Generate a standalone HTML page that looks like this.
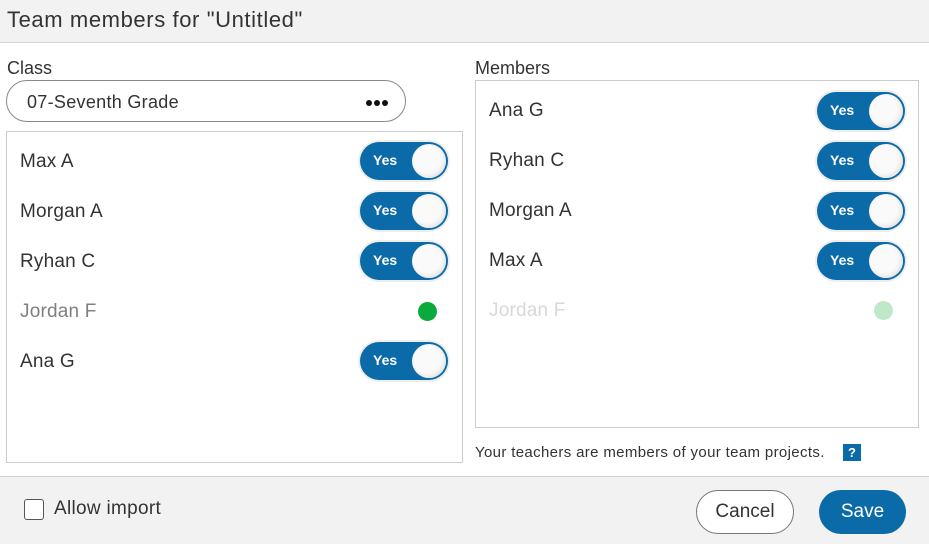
<!DOCTYPE html>
<html><head><meta charset="utf-8"><style>
*{box-sizing:border-box;margin:0;padding:0}
body{width:929px;height:544px;position:relative;background:#fff;font-family:"Liberation Sans",sans-serif;color:#333;overflow:hidden}
.abs{position:absolute}
.hdr{left:0;top:0;width:929px;height:43px;background:#f2f2f2;border-bottom:1px solid #d4d4d4}
.hdr div{position:absolute;left:7px;top:7px;font-size:22px;letter-spacing:0.6px;color:#333}
.lbl{font-size:18px;color:#333}
.sel{left:6px;top:80px;width:400px;height:42px;border:1px solid #888;border-radius:21px}
.sel span{position:absolute;left:20px;top:11px;font-size:18px;letter-spacing:0.3px;color:#333}
.box{border:1px solid #ccc}
.row{position:absolute;font-size:19px;letter-spacing:0.2px;color:#333}
.tg{position:absolute;width:88px;height:38px;background:#0b6aa8;border-radius:19px;box-shadow:0 0 0 2px #eee}
.tg b{position:absolute;left:13px;top:10px;color:#fff;font-size:14px;font-weight:bold}
.tg i{position:absolute;right:2px;top:2px;width:34px;height:34px;border-radius:50%;background:#fafafa;box-shadow:inset -2px -2px 4px #e4e4e4}
.dot{position:absolute;width:19px;height:19px;border-radius:50%}
.ftr{left:0;top:476px;width:929px;height:68px;background:#f2f2f2;border-top:1px solid #d4d4d4}
.dd{position:absolute;top:19px;width:6px;height:6px;border-radius:50%;background:#111}
</style></head><body>
<div class="abs hdr"><div>Team members for "Untitled"</div></div>
<div class="abs lbl" style="left:7px;top:58px">Class</div>
<div class="abs sel"><span>07-Seventh Grade</span><i class="dd" style="left:359px"></i><i class="dd" style="left:367px"></i><i class="dd" style="left:375px"></i></div>
<div class="abs box" style="left:6px;top:131px;width:457px;height:332px"></div>
<div class="row" style="left:20px;top:151px">Max A</div><div class="tg" style="left:360px;top:142px"><b>Yes</b><i></i></div>
<div class="row" style="left:20px;top:201px">Morgan A</div><div class="tg" style="left:360px;top:192px"><b>Yes</b><i></i></div>
<div class="row" style="left:20px;top:251px">Ryhan C</div><div class="tg" style="left:360px;top:242px"><b>Yes</b><i></i></div>
<div class="row" style="left:20px;top:301px;color:#808080">Jordan F</div><div class="dot" style="left:418px;top:302px;background:#0aaa3c"></div>
<div class="row" style="left:20px;top:351px">Ana G</div><div class="tg" style="left:360px;top:342px"><b>Yes</b><i></i></div>

<div class="abs lbl" style="left:475px;top:58px">Members</div>
<div class="abs box" style="left:475px;top:80px;width:444px;height:348px"></div>
<div class="row" style="left:489px;top:100px">Ana G</div><div class="tg" style="left:817px;top:92px"><b>Yes</b><i></i></div>
<div class="row" style="left:489px;top:150px">Ryhan C</div><div class="tg" style="left:817px;top:142px"><b>Yes</b><i></i></div>
<div class="row" style="left:489px;top:200px">Morgan A</div><div class="tg" style="left:817px;top:192px"><b>Yes</b><i></i></div>
<div class="row" style="left:489px;top:250px">Max A</div><div class="tg" style="left:817px;top:242px"><b>Yes</b><i></i></div>
<div class="row" style="left:489px;top:300px;color:#d8d8d8">Jordan F</div><div class="dot" style="left:874px;top:301px;background:#bfe8c9"></div>

<div class="abs" style="left:475px;top:444px;font-size:15px;letter-spacing:0.35px;color:#333">Your teachers are members of your team projects.</div>
<div class="abs" style="left:843px;top:444px;width:18px;height:17px;background:#0b6aa8;color:#fff;font-size:13px;font-weight:bold;text-align:center;line-height:17px">?</div>

<div class="abs ftr"></div>
<div class="abs" style="left:24px;top:499px;width:20px;height:21px;border:1px solid #555;border-radius:3px;background:#fff"></div>
<div class="abs" style="left:54px;top:498px;font-size:19px;letter-spacing:0.3px;color:#333">Allow import</div>
<div class="abs" style="left:696px;top:490px;width:98px;height:44px;border:1px solid #777;border-radius:22px;background:#fff;text-align:center;line-height:42px;font-size:19px;color:#333">Cancel</div>
<div class="abs" style="left:819px;top:490px;width:87px;height:44px;border-radius:22px;background:#0b6aa8;text-align:center;line-height:44px;font-size:19px;color:#fff">Save</div>
</body></html>
